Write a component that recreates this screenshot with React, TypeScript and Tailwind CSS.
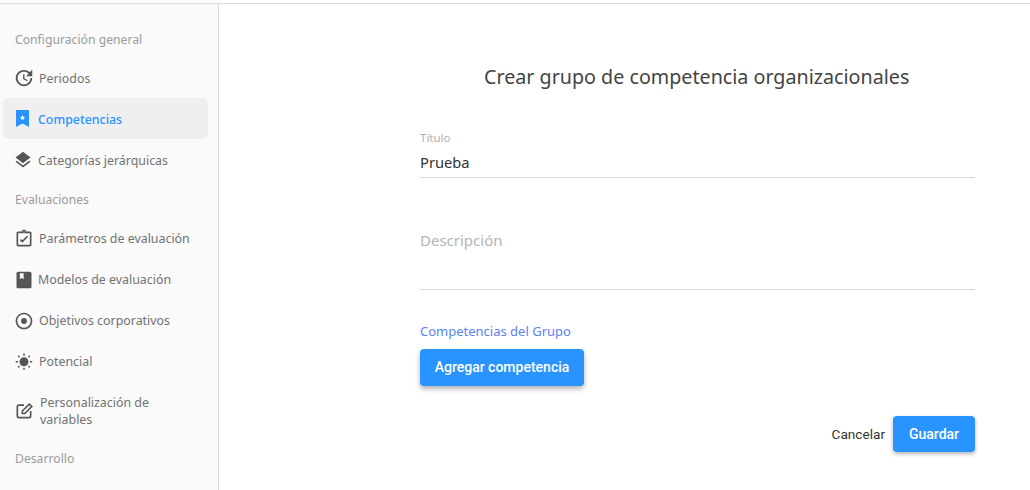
import type { ReactNode } from "react";

const icons = {
  update:
    "M21 10.120h-6.780l2.740-2.820c-2.730-2.700-7.150-2.800-9.880-.1-2.730 2.710-2.730 7.080 0 9.790s7.150 2.710 9.880 0C18.320 15.650 19 14.080 19 12.100h2c0 1.980-.88 4.550-2.640 6.290-3.510 3.480-9.210 3.480-12.720 0-3.500-3.470-3.530-9.110-.02-12.580s9.140-3.470 12.650 0L21 3v7.120zM12.500 8v4.250l3.500 2.080-.72 1.210L11 13V8h1.500z",
  layers: "M11.990 18.540l-7.370-5.730L3 14.070l9 7 9-7-1.630-1.270-7.380 5.740zM12 16l7.360-5.730L21 9l-9-7-9 7 1.630 1.270L12 16z",
  clipboard:
    "M19 3h-4.180C14.400 1.840 13.300 1 12 1c-1.300 0-2.400.84-2.820 2H5c-1.100 0-2 .9-2 2v14c0 1.100.9 2 2 2h14c1.100 0 2-.9 2-2V5c0-1.100-.9-2-2-2zm-7-.25c.41 0 .75.34.75.75s-.34.75-.75.75-.75-.34-.75-.75.34-.75.75-.75zM19 19H5V5h14v14zM17 9.400 15.600 8 10 13.600 8.400 12 7 13.400l3 3z",
  book: "M5 2h14c1.100 0 2 .9 2 2v16c0 1.100-.9 2-2 2H5c-1.100 0-2-.9-2-2V4c0-1.100.9-2 2-2zm2 2v7l2.300-1.500L11.600 11V4H7z",
  radio:
    "M12 8.500a3.500 3.500 0 1 0 0 7 3.500 3.500 0 0 0 0-7zM12 2C6.480 2 2 6.480 2 12s4.480 10 10 10 10-4.480 10-10S17.520 2 12 2zm0 18c-4.420 0-8-3.580-8-8s3.580-8 8-8 8 3.580 8 8-3.580 8-8 8z",
  sun: "M6.760 4.840l-1.800-1.790-1.410 1.410 1.790 1.790 1.420-1.410zM4 10.500H1v2h3v-2zm9-9.950h-2V3.500h2V.55zm7.450 3.910l-1.410-1.410-1.790 1.790 1.410 1.410 1.790-1.790zm-3.210 13.700l1.790 1.800 1.410-1.410-1.800-1.790-1.400 1.400zM20 10.500v2h3v-2h-3zm-8-5c-3.310 0-6 2.690-6 6s2.690 6 6 6 6-2.690 6-6-2.690-6-6-6zm-1 16.950h2V19.500h-2v2.950zm-7.450-3.910l1.410 1.410 1.790-1.800-1.410-1.410-1.790 1.800z",
  edit: "M12 4H6a3 3 0 0 0-3 3v11a3 3 0 0 0 3 3h12a3 3 0 0 0 3-3v-6h-2v6a1 1 0 0 1-1 1H6a1 1 0 0 1-1-1V7a1 1 0 0 1 1-1h6V4zM18.300 2.300 9 11.600V16h4.400l9.300-9.300-4.400-4.400zM12.600 14H11v-1.600l7.300-7.300 1.600 1.600-7.300 7.300z",
};

function Heading({ children, nudge = "" }: { children: ReactNode; nudge?: string }) {
  return <div className={`flex h-[38px] items-center pl-[15px] text-[12.2px] text-[#9a9a9a] ${nudge}`}>{children}</div>;
}

function NavItem({
  d,
  label,
  tall = false,
  gap = "ml-[5px]",
  size = "h-5 w-5",
  nudge = "",
}: {
  d: string;
  label: ReactNode;
  tall?: boolean;
  gap?: string;
  size?: string;
  nudge?: string;
}) {
  return (
    <div className={`mx-[3px] flex w-[205px] items-center pl-[11px] text-[#555] ${tall ? "h-[58px]" : "h-[41px]"}`}>
      <svg viewBox="0 0 24 24" className={`${size} shrink-0`} fill="currentColor">
        <path d={d} />
      </svg>
      <span className={`${gap} ${nudge} pr-4 text-[12.4px] leading-[17px] text-[#727272]`}>{label}</span>
    </div>
  );
}

export default function App() {
  return (
    <div className="h-[490px] w-[1030px] overflow-hidden bg-white font-['Noto_Sans',sans-serif]">
      <div className="h-1 border-b border-[#dcdcdc] bg-white" />
      <div className="flex h-[486px]">
        <aside className="w-[219px] shrink-0 overflow-hidden border-r border-[#d8d8d8] bg-[#fafafa] pt-[16px]">
          <Heading nudge="pt-[2px]">Configuración general</Heading>
          <div className="-mt-[1px]">
            <NavItem d={icons.update} label="Periodos" size="-ml-px h-[22px] w-[22px]" gap="ml-[4px]" nudge="pt-[2px]" />
          </div>
          <div className="mx-[3px] flex h-[41px] w-[205px] items-center rounded-[5px] bg-[#efefef] pl-[13px]">
            <svg viewBox="0 0 13 17" className="h-[17px] w-[13px] shrink-0">
              <path d="M0 0h13v17l-6.500-3.500L0 17z" fill="#2994ff" />
              <path d="M6.500 5l.8 1.700 1.800.2-1.300 1.200.4 1.800-1.700-.9-1.700.9.4-1.800L3.900 6.900l1.800-.2z" fill="#fff" />
            </svg>
            <span className="ml-[9px] pt-[2px] text-[12.4px] leading-[17px] font-medium text-[#2994ff]">Competencias</span>
          </div>
          <NavItem d={icons.layers} label="Categorías jerárquicas" gap="ml-[5px]" size="-ml-px h-5 w-5" nudge="pt-[2px]" />
          <Heading nudge="pt-[2px]">Evaluaciones</Heading>
          <NavItem d={icons.clipboard} label="Parámetros de evaluación" />
          <NavItem d={icons.book} label="Modelos de evaluación" gap="ml-1" />
          <NavItem d={icons.radio} label="Objetivos corporativos" />
          <NavItem d={icons.sun} label="Potencial" size="mx-px h-[18px] w-[18px]" />
          <NavItem d={icons.edit} label="Personalización de variables" tall gap="ml-[6px]" />
          <Heading>Desarrollo</Heading>
          <NavItem d={icons.sun} label="" size="mx-px h-[18px] w-[18px]" />
        </aside>
        <main className="flex-1 pl-[201px]">
          <div className="w-[555px]">
            <h1 className="mt-[59px] pl-[64px] text-[19.7px] leading-[28px] font-normal text-[#444]">
              Crear grupo de competencia organizacionales
            </h1>
            <div className="mt-[39px] border-b border-[#dcdcdc] pb-[3px]">
              <div className="text-[11.5px] leading-[16px] text-[#b0b0b0]">Título</div>
              <div className="mt-[4px] text-[14.7px] leading-[24px] text-[#333]">Prueba</div>
            </div>
            <div className="mt-[50px] h-[62px] border-b border-[#dcdcdc] text-[15px] leading-[24px] text-[#b4b4b4]">
              Descripción
            </div>
            <div className="mt-[32px] text-[13px] leading-[18px] text-[#5b83f0]">Competencias del Grupo</div>
            <button className="mt-[9px] flex h-[37px] w-[164px] items-center justify-center rounded-[4px] bg-[#2994ff] font-['Roboto',sans-serif] text-[14px] font-medium text-white shadow-[0_3px_5px_rgba(0,0,0,0.3)]">
              Agregar competencia
            </button>
            <div className="mt-[30px] flex items-center justify-end">
              <span className="mr-2 font-['Roboto',sans-serif] text-[13.6px] text-[#333]">Cancelar</span>
              <button className="flex h-9 w-[82px] items-center justify-center rounded-[4px] bg-[#2994ff] font-['Roboto',sans-serif] text-[14px] font-medium text-white shadow-[0_2px_4px_rgba(0,0,0,0.3)]">
                Guardar
              </button>
            </div>
          </div>
        </main>
      </div>
    </div>
  );
}
